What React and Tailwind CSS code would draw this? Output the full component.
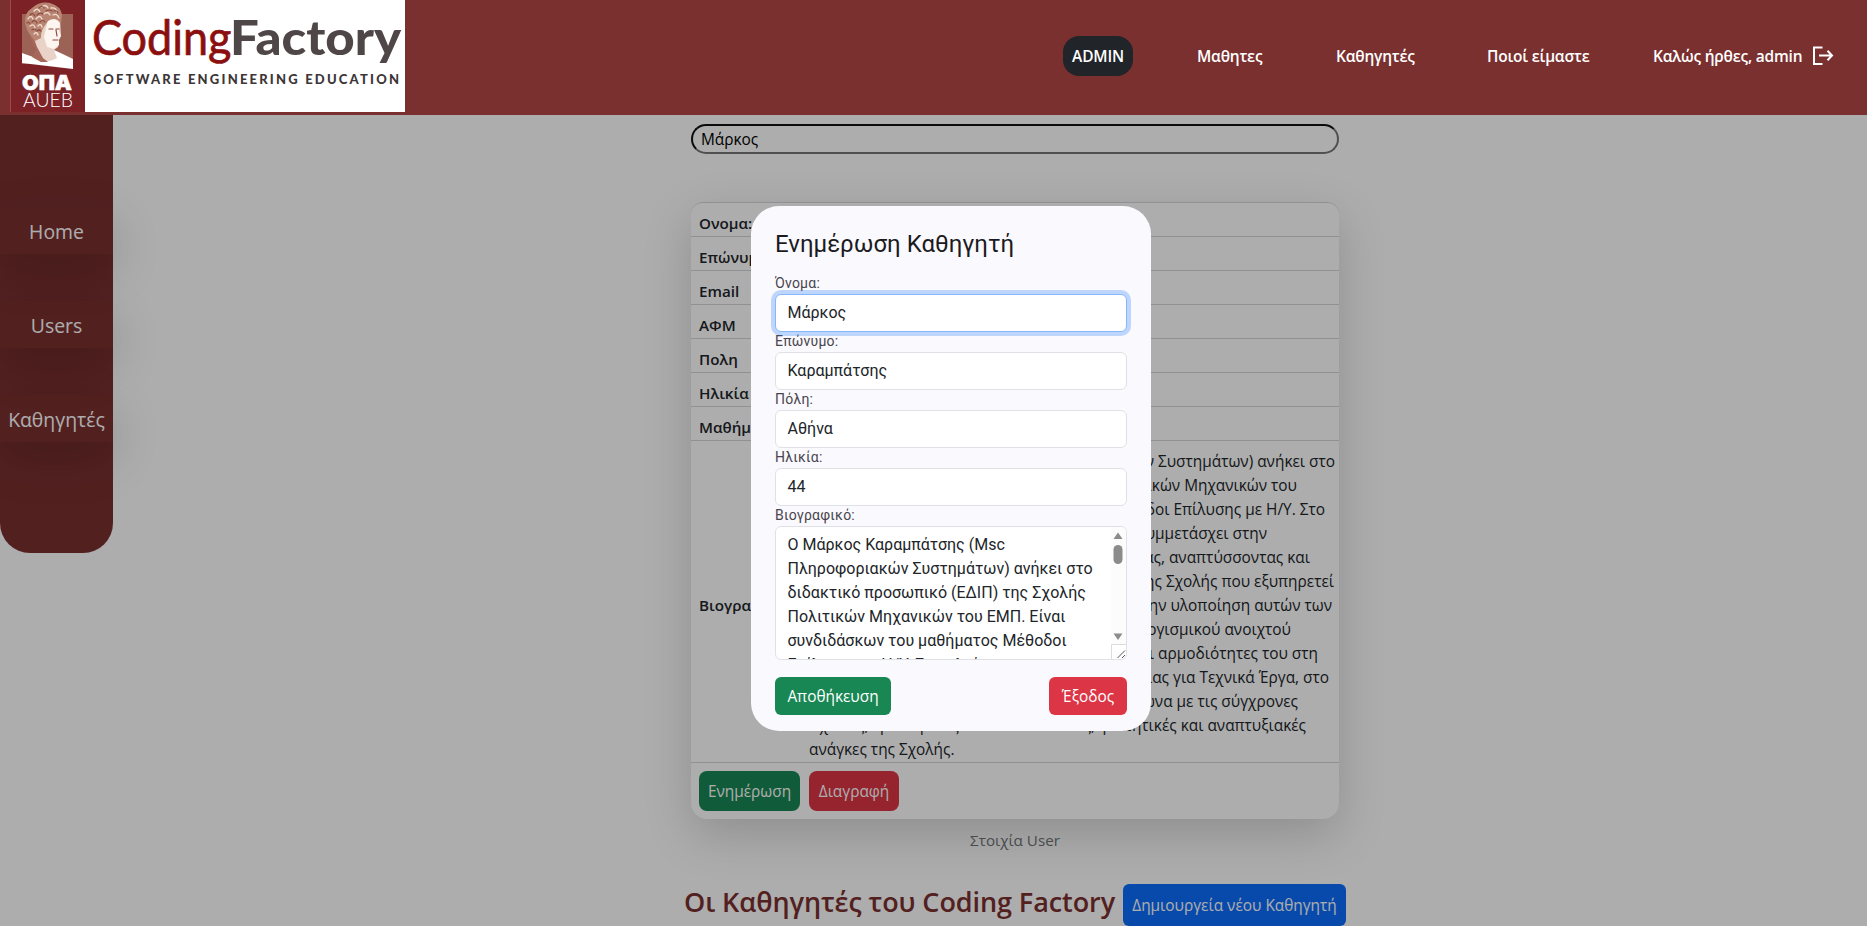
const SEGOE = "font-['Open_Sans','Noto_Sans',sans-serif]";

function Logo() {
  return (
    <svg width="395" height="112" viewBox="0 0 395 112" className="ml-2.5 block shrink-0">
      <rect x="0" y="0" width="75" height="112" fill="#7c2227" />
      <rect x="0" y="0" width="1" height="112" fill="#9a4a4c" />
      <rect x="75" y="0" width="320" height="112" fill="#fff" />
      <rect x="12" y="14" width="51" height="50" fill="#9c6255" />
      <path d="M12 53 L26 58 L44 50 Q53 54 63 59 V69 L12 63 Z" fill="#fff" />
      <path d="M21 34 L27 49 L23 57 Q32 66 47 58 L44 50 L48 47 L49 40 L51 36 L50 18 L26 16 Z" fill="#e9d3c8" />
      <path d="M38 20 Q47 17 50 24 L49 31 L51 36 L49 39 L49 45 L44 49 L37 47 L34 37 Z" fill="#fdf5ef" />
      <path d="M21 30 L27 47 L33 58 L38 62 L31 62 L22 57 L26 50 L20 38 Z" fill="#a6675a" />
      <path d="M15 23 Q14 13 22 8 Q30 1 40 3 Q51 6 52 15 L51 24 Q46 16 38 21 L34 27 Q31 31 31 38 L25 41 Q17 33 15 23 Z" fill="#b98573" />
      <g fill="none" stroke="#f3ddd0" strokeWidth="1.3" strokeLinecap="round">
        <path d="M18 19q3-5 5 0M24 11q4-4 6 1M32 7q4-3 6 1M41 8q5-1 6 4M20 26q4-3 5 2M26 19q4-5 6 0M34 14q4-3 6 1M43 15q4-2 6 3M24 34q3-3 4 1M28 26q3-3 4 1" />
      </g>
      <g fill="none" stroke="#8b4a40" strokeWidth="1.2" strokeLinecap="round">
        <path d="M20 15q3-3 5 1M27 15q3-3 6-1M36 11q3-2 6 0M22 22q3-3 5 1M22 30q3-2 4 0M30 22q3-3 5 0M17 23q2-2 3 1M29 8q3-3 5 0M44 11q3-1 4 2M27 31q2-2 4 0M39 29h4M46 29h3M43 40h5M46 30l1 6" />
      </g>
      <text x="12" y="89.500" fontFamily="Inter, sans-serif" fontWeight="900" fontSize="20.500" fill="#fff" stroke="#fff" strokeWidth="0.5" textLength="50" lengthAdjust="spacingAndGlyphs">ΟΠΑ</text>
      <text x="13" y="107" fontFamily="Lato, sans-serif" fontWeight="300" fontSize="20" fill="#fff" textLength="50" lengthAdjust="spacingAndGlyphs">AUEB</text>
      <text x="82" y="55" fontFamily="Lato, sans-serif" fontWeight="400" fontSize="48" fill="#8c0f10" stroke="#8c0f10" strokeWidth="0.7" textLength="139.500" lengthAdjust="spacingAndGlyphs">Coding</text>
      <text x="220" y="55" fontFamily="Lato, sans-serif" fontWeight="900" fontSize="47" fill="#4f4648" textLength="171" lengthAdjust="spacingAndGlyphs">Factory</text>
      <text x="84" y="84" fontFamily="Lato, sans-serif" fontWeight="900" fontSize="13" fill="#3d3638" textLength="305" lengthAdjust="spacing">SOFTWARE ENGINEERING EDUCATION</text>
    </svg>
  );
}

function Header() {
  return (
    <header className="relative z-20 flex h-[115px] items-start justify-between bg-[#7b3030]">
      <Logo />
      <nav className="mr-[33px] flex h-[112px] items-center text-[15.5px] font-semibold tracking-[-0.2px] text-white">
        <a className="flex h-10 w-[70px] items-center justify-center rounded-2xl bg-[#212529] pt-0.5">ADMIN</a>
        <a className="ml-16 w-[67px] whitespace-nowrap pt-0.5">Μαθητες</a>
        <a className="ml-[72px] w-20 whitespace-nowrap pt-0.5">Καθηγητές</a>
        <a className="ml-[71px] w-[102px] whitespace-nowrap pt-0.5">Ποιοί είμαστε</a>
        <a className="ml-16 w-[151px] whitespace-nowrap pt-0.5">Καλώς ήρθες, admin</a>
        <svg className="ml-2" width="22" height="20" viewBox="0 0 22 20" fill="none" stroke="#fff" strokeWidth="2">
          <path d="M10.500 1.500H2V18H10.500M7 9.500H20M15.500 4.800L20 9.500L15.500 14.200" />
        </svg>
      </nav>
    </header>
  );
}

function Sidebar() {
  const items = ["Home", "Users", "Καθηγητές"];
  return (
    <aside className="flex h-[438px] w-[113px] shrink-0 flex-col gap-[47px] rounded-b-[30px] bg-[#7b3030] pt-[92px] text-white">
      {items.map((label) => (
        <a key={label} className="flex h-[47px] items-center justify-center whitespace-nowrap pt-[3px] text-[19.4px] font-medium shadow-[0_16px_48px_rgba(0,0,0,0.175)]">
          {label}
        </a>
      ))}
    </aside>
  );
}

const ROWS = ["Ονομα:", "Επώνυμο", "Email", "ΑΦΜ", "Πολη", "Ηλικία", "Μαθήματα"];

const BIO = [
  ["w-[526px]", "Ο Μάρκος Καραμπάτσης (Msc Πληροφοριακών Συστημάτων) ανήκει στο"],
  ["w-[488px]", "διδακτικό προσωπικό (ΕΔΙΠ) της Σχολής Πολιτικών Μηχανικών του"],
  ["w-[516px]", "ΕΜΠ. Είναι συνδιδάσκων του μαθήματος Μέθοδοι Επίλυσης με Η/Υ. Στο"],
  ["w-[458px]", "πλαίσιο των καθηκόντων του στη Σχολή, συμμετάσχει στην"],
  ["w-[501px]", "υποστήριξη της εκπαιδευτικής διαδικασίας, αναπτύσσοντας και"],
  ["w-[525px]", "συντηρώντας το λογισμικό της Σχολής που εξυπηρετεί"],
  ["w-[523px]", "τις ανάγκες των μαθημάτων. Για την υλοποίηση αυτών των"],
  ["w-[482px]", "εφαρμογών γίνεται χρήση λογισμικού ανοιχτού"],
  ["w-[509px]", "κώδικα. Επιπλέον περιλαμβάνονται και αρμοδιότητες του στη"],
  ["w-[520px]", "Εργαστήριο Πληροφορικής και Ασφάλειας για Τεχνικά Έργα, στο"],
  ["w-[489px]", "οποίο εξελίσσει τις υποδομές σύμφωνα με τις σύγχρονες"],
  ["w-[497px]", "τεχνικές, ερευνητικές και εκπαιδευτικές, φοιτητικές και αναπτυξιακές"],
];

function TeacherCard() {
  return (
    <section className="mt-[48px] w-[648px] rounded-b-2xl rounded-t-xl border-t border-[#d3d6d9] text-[15.4px] text-[#212529] shadow-[0_16px_48px_rgba(0,0,0,0.175)]">
      {ROWS.map((label) => (
        <div key={label} className="flex h-[34px] items-end border-b border-[#d3d6d9] pb-0.5 pl-2 text-[15.2px] font-semibold leading-[22px]">
          {label}
        </div>
      ))}
      <div className="flex h-[322px] items-center border-b border-[#d3d6d9]">
        <div className="w-[118px] shrink-0 pl-2 pt-2 text-[15.2px] font-semibold">Βιογραφικό</div>
        <div className="pt-2 leading-6">
          {BIO.map(([width, line]) => (
            <div key={line} className={`flex justify-end whitespace-nowrap ${width}`}>{line}</div>
          ))}
          <div>ανάγκες της Σχολής.</div>
        </div>
      </div>
      <div className="flex h-[56px] items-center gap-[9px] pb-px pl-2 text-white">
        <button className="h-10 w-[101px] rounded-lg bg-[#198754] pt-0.5">Ενημέρωση</button>
        <button className="h-10 w-[90px] rounded-lg bg-[#dc3545] pt-0.5">Διαγραφή</button>
      </div>
    </section>
  );
}

function Field({ label, value, focused }) {
  return (
    <label className="block text-sm leading-[18px] tracking-[0.23px] text-[#49454e]">
      <span className="block h-5">{label}</span>
      <span
        className={`relative flex h-[38px] items-center rounded-md border bg-white px-[11.5px] text-base tracking-normal text-[#212529] ${
          focused ? "border-[#86b7fe] shadow-[0_0_0_4px_rgba(13,110,253,0.25)]" : "border-[#dee2e6]"
        }`}
      >
        {value}
      </span>
    </label>
  );
}

function BioField() {
  return (
    <div className="text-sm leading-[18px] tracking-[0.23px] text-[#49454e]">
      <div className="h-5">Βιογραφικό:</div>
      <div className="flex h-[134px] overflow-hidden rounded-md border border-[#dee2e6] bg-white pl-[11.5px]">
        <div className="grow whitespace-nowrap pt-1.5 text-base leading-6 tracking-normal text-[#212529]">
          <div>Ο Μάρκος Καραμπάτσης (Msc</div>
          <div>Πληροφοριακών Συστημάτων) ανήκει στο</div>
          <div>διδακτικό προσωπικό (ΕΔΙΠ) της Σχολής</div>
          <div>Πολιτικών Μηχανικών του ΕΜΠ. Είναι</div>
          <div>συνδιδάσκων του μαθήματος Μέθοδοι</div>
          <div>Επίλυσης με Η/Υ. Στο πλαίσιο των</div>
        </div>
        <svg width="15" height="132" viewBox="0 0 15 132" className="shrink-0">
          <rect width="15" height="117" fill="#fcfcfc" />
          <path d="M7 5.500L11.500 12H2.500Z" fill="#8b8b8b" />
          <rect x="2.500" y="18" width="9" height="19" rx="4.500" fill="#8b8b8b" />
          <path d="M7 113L2.500 106.500H11.500Z" fill="#8b8b8b" />
          <path d="M0.500 132V117.500H15" fill="none" stroke="#dcdcdc" />
          <path d="M6.500 131L14 123.500M11 131L14 128" fill="none" stroke="#555" />
        </svg>
      </div>
    </div>
  );
}

function Dialog() {
  return (
    <div className="absolute left-[751px] top-[206px] z-30 flex h-[525px] w-[400px] flex-col rounded-[28px] bg-[#faf9fd] px-6 pt-[18px] font-[Roboto,sans-serif]">
      <h2 className="mb-[18px] h-8 whitespace-nowrap text-2xl leading-10 text-[#1b1b1f]">Ενημέρωση Καθηγητή</h2>
      <Field label="Όνομα:" value="Μάρκος" focused />
      <Field label="Επώνυμο:" value="Καραμπάτσης" />
      <Field label="Πόλη:" value="Αθήνα" />
      <Field label="Ηλικία:" value="44" />
      <BioField />
      <div className={`mt-[17px] flex justify-between text-[15.4px] text-white ${SEGOE}`}>
        <button className="h-[38px] w-[116px] rounded-md bg-[#198754] pt-0.5">Αποθήκευση</button>
        <button className="h-[38px] w-[78px] rounded-md bg-[#dc3545] pt-0.5">Έξοδος</button>
      </div>
    </div>
  );
}

export default function App() {
  return (
    <div className={`relative h-[926px] w-[1867px] overflow-hidden bg-white ${SEGOE}`}>
      <Header />
      <div className="flex items-start">
        <Sidebar />
        <main className="ml-[571px] flex w-[662px] flex-col items-center">
          <div className="mt-[9px] flex h-[30px] w-[648px] items-center rounded-full border-2 border-t-[#111] border-r-[#767676] border-b-[#767676] border-l-[#111] px-2 pt-0.5 text-[15.4px] text-black">
            Μάρκος
          </div>
          <TeacherCard />
          <p className="mt-[9px] text-[15.2px] leading-6 text-[#6b6f73]">Στοιχία User</p>
          <div className="mt-8 flex w-full items-start justify-between">
            <h1 className="whitespace-nowrap text-[27px] font-semibold leading-9 tracking-[-0.08px] text-[#7b3030]">Οι Καθηγητές του Coding Factory</h1>
            <button className="h-[42px] w-[223px] whitespace-nowrap rounded-md bg-[#0d6efd] pt-0.5 text-[15.4px] text-white">Δημιουργεία νέου Καθηγητή</button>
          </div>
        </main>
      </div>
      <div className="absolute inset-x-0 bottom-0 top-[115px] z-10 bg-black/32" />
      <Dialog />
    </div>
  );
}
